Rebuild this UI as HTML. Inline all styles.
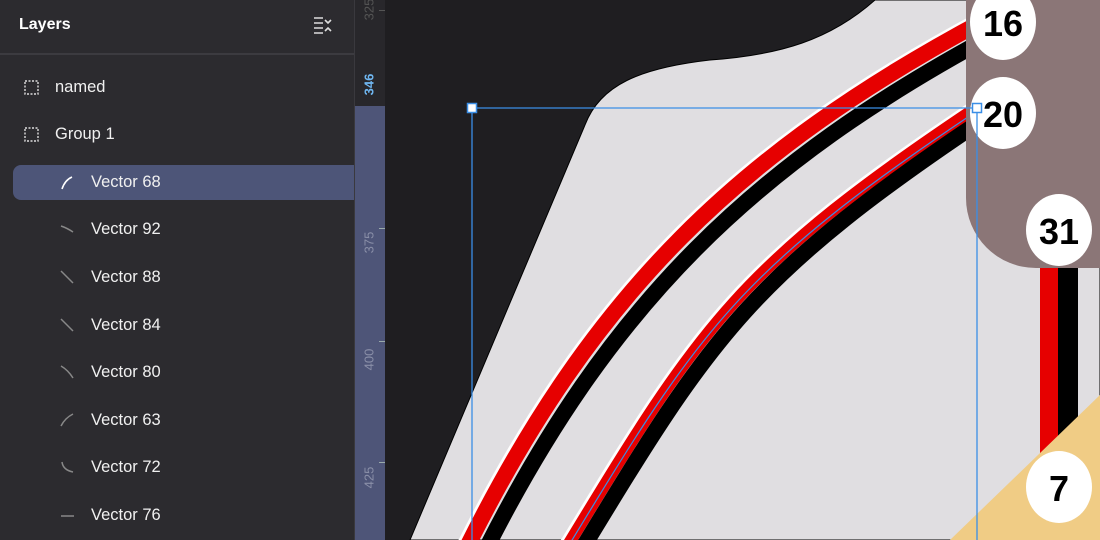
<!DOCTYPE html>
<html><head><meta charset="utf-8"><style>
*{margin:0;padding:0;box-sizing:border-box}
body{width:1100px;height:540px;overflow:hidden;background:#1f1e21;font-family:"Liberation Sans",sans-serif;position:relative}
#panel{position:absolute;left:0;top:0;width:354px;height:540px;background:#2c2b2f}
.hdr{position:absolute;left:19px;top:16px;color:#fff;font-size:16px;font-weight:bold}
.sep{position:absolute;left:0;top:53px;width:354px;height:2px;background:#3c3b40}
.row{position:absolute;left:0;width:354px;height:35px;color:#f0f0f0;font-size:16.5px;line-height:35px}
.sel{left:13px;width:341px;background:#4d5578;border-radius:8px 0 0 8px}
.row span{position:absolute}
.row svg{position:absolute}
#ruler{position:absolute;left:354px;top:0;width:31px;height:540px;background:#28272b;border-left:1px solid #3a393e}
.lbl{position:absolute;font-size:13px;color:#8a8fa8;transform:rotate(-90deg);transform-origin:center;width:40px;text-align:center;left:-6px}
.tick{position:absolute;left:24px;width:6px;height:1px;background:#9aa}
</style></head><body>
<div id="panel">
<div class="hdr">Layers</div>
<svg style="position:absolute;left:313px;top:16px" width="20" height="18" viewBox="0 0 20 18" fill="none" stroke="#ddd" stroke-width="1.6"><path d="M1 2h9M1 7h9M1 12h9M1 17h9M12 4l3 3 3-3M12 15l3-3 3 3"/></svg>
<div class="sep"></div>
<div class="row" style="top:70px"><svg style="left:24px;top:10px" width="15" height="15"><rect x="1" y="1" width="13" height="13" fill="none" stroke="#ddd" stroke-width="1.4" stroke-dasharray="2 1.5"/></svg><span style="left:55px">named</span></div>
<div class="row" style="top:117px"><svg style="left:24px;top:10px" width="15" height="15"><rect x="1" y="1" width="13" height="13" fill="none" stroke="#ddd" stroke-width="1.4" stroke-dasharray="2 1.5"/></svg><span style="left:55px">Group 1</span></div>
<div class="row sel" style="top:165px"><svg style="left:47px;top:10px" width="14" height="15"><path d="M2 14Q5 5 12 2" fill="none" stroke="#fff" stroke-width="1.6"/></svg><span style="left:78px">Vector 68</span></div>
<div class="row" style="top:212px"><svg style="left:60px;top:10px" width="14" height="15"><path d="M1 4Q7 6 13 10" fill="none" stroke="#888" stroke-width="1.5"/></svg><span style="left:91px">Vector 92</span></div>
<div class="row" style="top:260px"><svg style="left:60px;top:10px" width="14" height="15"><path d="M1 1Q6 6 13 13" fill="none" stroke="#888" stroke-width="1.5"/></svg><span style="left:91px">Vector 88</span></div>
<div class="row" style="top:308px"><svg style="left:60px;top:10px" width="14" height="15"><path d="M1 1Q6 6 13 13" fill="none" stroke="#888" stroke-width="1.5"/></svg><span style="left:91px">Vector 84</span></div>
<div class="row" style="top:355px"><svg style="left:60px;top:10px" width="14" height="15"><path d="M1 1Q8 5 13 13" fill="none" stroke="#888" stroke-width="1.5"/></svg><span style="left:91px">Vector 80</span></div>
<div class="row" style="top:403px"><svg style="left:60px;top:10px" width="14" height="15"><path d="M1 13Q5 5 13 1" fill="none" stroke="#888" stroke-width="1.5"/></svg><span style="left:91px">Vector 63</span></div>
<div class="row" style="top:450px"><svg style="left:60px;top:10px" width="14" height="15"><path d="M2 2Q3 10 13 12" fill="none" stroke="#888" stroke-width="1.5"/></svg><span style="left:91px">Vector 72</span></div>
<div class="row" style="top:498px"><svg style="left:60px;top:10px" width="14" height="15"><path d="M1 8H14" fill="none" stroke="#888" stroke-width="1.5"/></svg><span style="left:91px">Vector 76</span></div>
</div>
<div id="ruler">
<div style="position:absolute;left:0;top:106px;width:30px;height:434px;background:#4e5578"></div>
<div class="lbl" style="top:2px;color:#555">325</div><div class="tick" style="top:10px;background:#555"></div>
<div class="lbl" style="top:77px;color:#6fb6f0;font-weight:bold">346</div>
<div class="lbl" style="top:235px">375</div><div class="tick" style="top:228px"></div>
<div class="lbl" style="top:352px">400</div><div class="tick" style="top:341px"></div>
<div class="lbl" style="top:470px">425</div><div class="tick" style="top:462px"></div>
</div>
<svg style="position:absolute;left:0;top:0" width="1100" height="540" viewBox="0 0 1100 540">
<defs>
<clipPath id="c"><rect x="385" y="0" width="715" height="540"/></clipPath>
<path id="s1" d="M985 20 C738.6 151.6 594 293 468 545"/>
<path id="s2" d="M985 102 C736 267 700 328 568 545"/>
</defs>
<g clip-path="url(#c)" fill="none">
<path d="M875 0 C830 40 780 55 710 60 C640 68 600 85 585 125 L410 540 L1100 540 L1100 0Z" fill="#e0dee1" stroke="#000" stroke-width="1"/>
<use href="#s1" transform="translate(-2,-1)" stroke="#fff" stroke-width="17"/>
<use href="#s2" transform="translate(-2,-1)" stroke="#fff" stroke-width="13"/>
<use href="#s1" stroke="#e60000" stroke-width="16"/>
<use href="#s1" transform="translate(14,12)" stroke="#000" stroke-width="16"/>
<use href="#s2" stroke="#e60000" stroke-width="12"/>
<use href="#s2" transform="translate(11,9)" stroke="#000" stroke-width="16"/>
<use href="#s2" transform="translate(-2,5)" stroke="#3a8ee6" stroke-width="1.2"/>
<rect x="1040" y="260" width="19" height="200" fill="#e60000"/>
<rect x="1058" y="260" width="20" height="200" fill="#000"/>
<path d="M966 0 H1100 V268 H1036 A70 70 0 0 1 966 198Z" fill="#8b7677"/>
<path d="M1100 395 L1100 540 L950 540Z" fill="#f0cc85"/>
<g font-family="Liberation Sans,sans-serif" font-weight="bold" font-size="36" text-anchor="middle" fill="#000">
<ellipse cx="1003" cy="22" rx="33" ry="38" fill="#fff"/><text x="1003" y="36">16</text>
<ellipse cx="1003" cy="113" rx="33" ry="36" fill="#fff"/><text x="1003" y="127">20</text>
<ellipse cx="1059" cy="230" rx="33" ry="36" fill="#fff"/><text x="1059" y="244">31</text>
<ellipse cx="1059" cy="487" rx="33" ry="36" fill="#fff"/><text x="1059" y="501">7</text>
</g>
<path d="M472 540 V108 H977 V540" stroke="#3a8ee6" stroke-width="1.3"/>
<rect x="467.5" y="103.5" width="9" height="9" fill="#fff" stroke="#3a8ee6" stroke-width="1.5"/>
<rect x="972.5" y="103.5" width="9" height="9" fill="#fff" stroke="#3a8ee6" stroke-width="1.5"/>
</g>
</svg>
</body></html>
